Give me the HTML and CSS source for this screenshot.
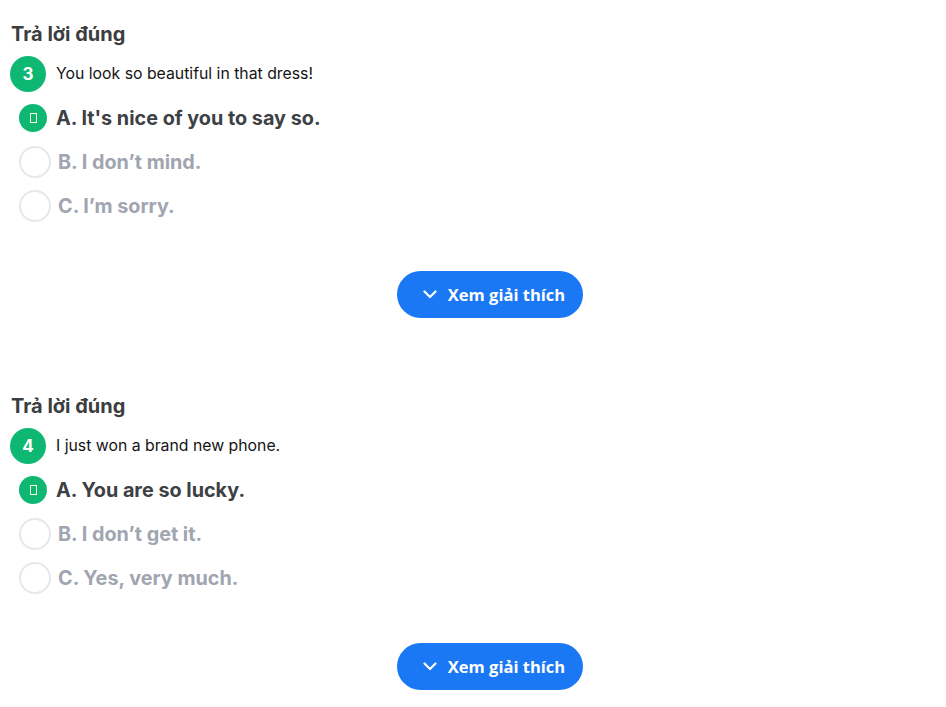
FILE: index.html
```html
<!DOCTYPE html>
<html lang="vi">
<head>
<meta charset="utf-8">
<title>Trả lời đúng</title>
<link rel="stylesheet" href="styles.css">
</head>
<body>
<div class="page">
  <section class="block">
    <h3 class="title">Trả lời đúng</h3>
    <div class="question">
      <span class="num">3</span>
      <span class="qtext">You look so beautiful in that dress!</span>
    </div>
    <ul class="answers">
      <li class="answer correct"><span class="mark"><span class="tofu"></span></span><span class="atext">A. It's nice of you to say so.</span></li>
      <li class="answer"><span class="mark"></span><span class="atext">B. I don’t mind.</span></li>
      <li class="answer"><span class="mark"></span><span class="atext">C. I’m sorry.</span></li>
    </ul>
    <div class="actions">
      <button class="explain"><svg class="chev" width="14" height="9" viewBox="0 0 14 9"><path d="M1.5 1.5 L7 7 L12.5 1.5" fill="none" stroke="#fff" stroke-width="2.2" stroke-linecap="round" stroke-linejoin="round"/></svg><span>Xem giải thích</span></button>
    </div>
  </section>
  <section class="block">
    <h3 class="title">Trả lời đúng</h3>
    <div class="question">
      <span class="num">4</span>
      <span class="qtext">I just won a brand new phone.</span>
    </div>
    <ul class="answers">
      <li class="answer correct"><span class="mark"><span class="tofu"></span></span><span class="atext">A. You are so lucky.</span></li>
      <li class="answer"><span class="mark"></span><span class="atext">B. I don’t get it.</span></li>
      <li class="answer"><span class="mark"></span><span class="atext">C. Yes, very much.</span></li>
    </ul>
    <div class="actions">
      <button class="explain"><svg class="chev" width="14" height="9" viewBox="0 0 14 9"><path d="M1.5 1.5 L7 7 L12.5 1.5" fill="none" stroke="#fff" stroke-width="2.2" stroke-linecap="round" stroke-linejoin="round"/></svg><span>Xem giải thích</span></button>
    </div>
  </section>
</div>
</body>
</html>
```

FILE: styles.css
```css
* { box-sizing: border-box; }
html, body { margin: 0; padding: 0; background: #fff; }
body { font-family: Inter, "Noto Sans", sans-serif; }
.page { padding: 22px 0 0 11px; width: 946px; }
.block { display: flex; flex-direction: column; }
.block + .block { margin-top: 76px; }
.title {
  margin: 0;
  font-size: 20px;
  line-height: 25px;
  font-weight: 700;
  color: #3b3d40;
}
.question {
  margin-top: 9px;
  display: flex;
  align-items: center;
  height: 36px;
  margin-left: -1px;
}
.num {
  width: 36px; height: 36px;
  border-radius: 50%;
  background: #0fb872;
  color: #fff;
  font-weight: 700;
  font-size: 17px;
  display: flex; align-items: center; justify-content: center;
}
.qtext {
  margin-left: 10px;
  font-size: 15.8px;
  color: #141414;
  margin-top: -2px;
}
.answers { list-style: none; margin: 4px 0 0; padding: 0 0 0 8px; }
.answer {
  height: 44px;
  display: flex;
  align-items: center;
  gap: 7px;
}
.mark {
  width: 32px; height: 32px;
  border-radius: 50%;
  border: 2px solid #e5e7eb;
  flex: none;
}
.answer.correct .mark {
  width: 28px; height: 28px;
  margin-right: 2px;
  border: none;
  background: #0fb872;
  display: flex; align-items: center; justify-content: center;
}
.tofu {
  width: 7px; height: 10px;
  border: 1px solid #fff9d6;
}
.atext {
  font-size: 19.8px;
  font-weight: 700;
  color: #a0a5b0;
}
.answer.correct .atext { color: #3d4044; }
.actions {
  margin-top: 43px;
  display: flex;
  justify-content: center;
  padding-right: 11px;
}
.explain {
  height: 47px;
  width: 186px;
  border: none;
  border-radius: 24px;
  background: #1a78f4;
  color: #fff;
  font-family: "Open Sans", "Noto Sans", sans-serif;
  font-weight: 700;
  font-size: 16.5px;
  display: flex;
  align-items: center;
  justify-content: center;
  gap: 11px;
  padding: 0 0 0 8px;
  margin-left: 34px;
}
.chev { display: block; }
```
